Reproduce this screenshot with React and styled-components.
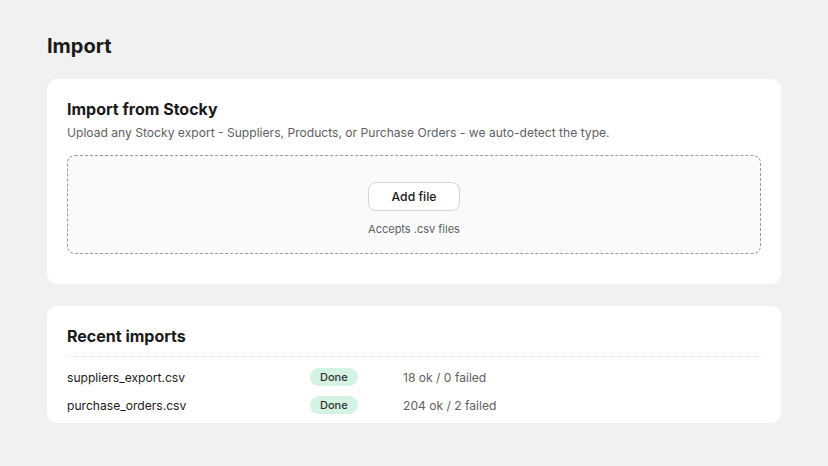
import React from "react";
import styled, { createGlobalStyle } from "styled-components";

const GlobalStyle = createGlobalStyle`
  body {
    margin: 0;
    background: #f1f1f1;
    font-family: Inter, "Noto Sans", sans-serif;
    color: #303030;
  }
`;

const Page = styled.div`
  padding: 32px 47px 40px;
  display: flex;
  flex-direction: column;
`;

const PageTitle = styled.h1`
  margin: 0 0 19px;
  font-size: 20px;
  line-height: 28px;
  font-weight: 700;
  color: #1a1a1a;
`;

const Card = styled.section`
  background: #ffffff;
  border-radius: 10px;
  padding: ${(p) => p.$pad || "20px"};
  margin-bottom: 22px;
`;

const CardTitle = styled.h2`
  margin: 0;
  font-size: 16px;
  line-height: 20px;
  font-weight: 650;
  color: #1a1a1a;
`;

const Subtitle = styled.p`
  margin: 4px 0 12px;
  font-size: 12.1px;
  line-height: 20px;
  color: #616161;
`;

const DropZone = styled.div`
  background: #f9fafa;
  border: 1px dashed #9a9a9a;
  border-radius: 8px;
  padding: 26px 0 16px;
  display: flex;
  flex-direction: column;
  align-items: center;
  gap: 10px;
`;

const AddButton = styled.button`
  height: 29px;
  width: 92px;
  background: #ffffff;
  border: 1px solid #d4d4d4;
  border-radius: 8px;
  font-family: inherit;
  font-size: 12.2px;
  font-weight: 450;
  color: #1a1a1a;
  cursor: pointer;
`;

const Hint = styled.span`
  font-size: 11px;
  line-height: 16px;
  color: #616161;
`;

const Divider = styled.div`
  border-top: 1px dotted #e3e3e3;
  margin-top: 10px;
`;

const Rows = styled.div`
  padding-top: 6px;
`;

const Row = styled.div`
  display: grid;
  grid-template-columns: 243px 93px 1fr;
  align-items: center;
  height: 28px;
  font-size: 12.1px;
`;

const FileName = styled.span`
  color: #1a1a1a;
`;

const Badge = styled.span`
  justify-self: start;
  background: #d4f3e3;
  color: #303030;
  border-radius: 10px;
  font-size: 11px;
  line-height: 18px;
  padding: 0 10px;
  font-weight: 450;
`;

const Result = styled.span`
  color: #616161;
`;

const imports = [
  { file: "suppliers_export.csv", status: "Done", result: "18 ok / 0 failed" },
  { file: "purchase_orders.csv", status: "Done", result: "204 ok / 2 failed" },
];

export default function App() {
  return (
    <>
      <GlobalStyle />
      <Page>
        <PageTitle>Import</PageTitle>
        <Card $pad="20px 20px 30px">
          <CardTitle>Import from Stocky</CardTitle>
          <Subtitle>
            Upload any Stocky export - Suppliers, Products, or Purchase Orders - we auto-detect the type.
          </Subtitle>
          <DropZone>
            <AddButton>Add file</AddButton>
            <Hint>Accepts .csv files</Hint>
          </DropZone>
        </Card>
        <Card $pad="20px 20px 4px">
          <CardTitle>Recent imports</CardTitle>
          <Divider />
          <Rows>
            {imports.map((r) => (
              <Row key={r.file}>
                <FileName>{r.file}</FileName>
                <Badge>{r.status}</Badge>
                <Result>{r.result}</Result>
              </Row>
            ))}
          </Rows>
        </Card>
      </Page>
    </>
  );
}
